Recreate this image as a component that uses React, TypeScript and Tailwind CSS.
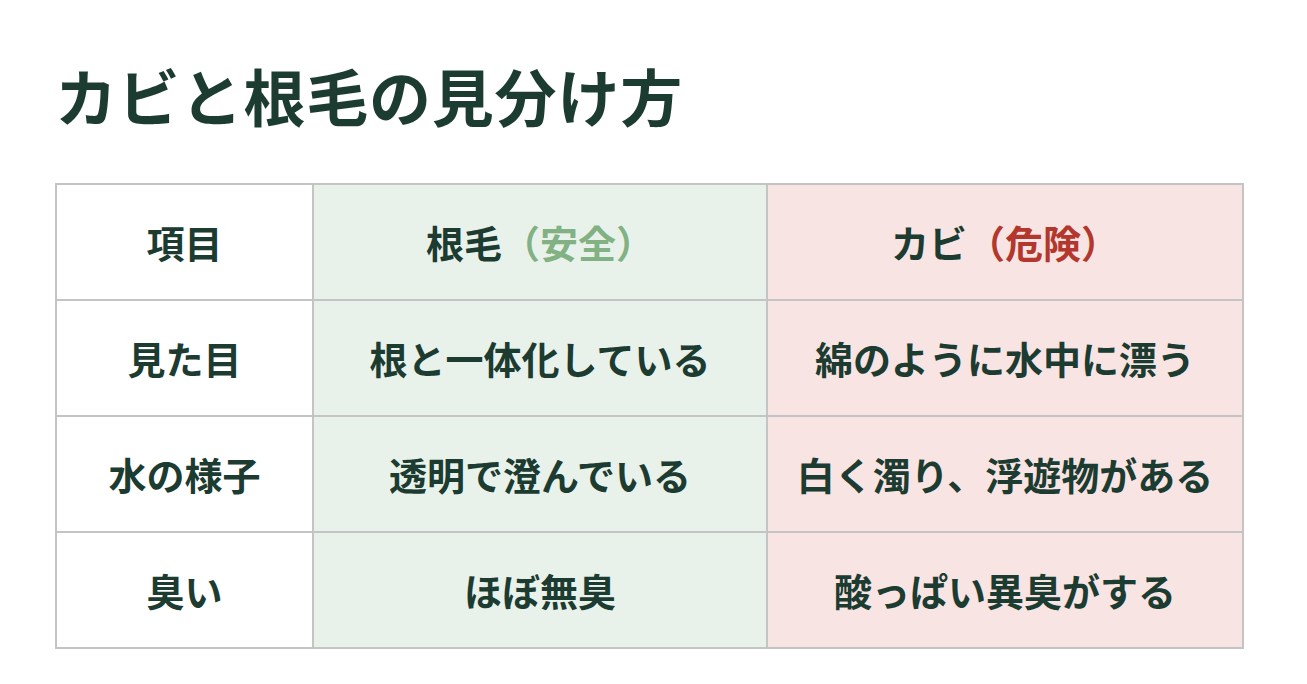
import React from "react";

type Row = { label: string; safe: string; danger: string };

const ROWS: Row[] = [
  { label: "見た目", safe: "根と一体化している", danger: "綿のように水中に漂う" },
  { label: "水の様子", safe: "透明で澄んでいる", danger: "白く濁り、浮遊物がある" },
  { label: "臭い", safe: "ほぼ無臭", danger: "酸っぱい異臭がする" },
];

const FONT = "font-['Noto_Sans_CJK_JP','Noto_Sans',sans-serif]";

export default function App() {
  return (
    <main className={`min-h-screen w-full bg-white px-[55px] pt-[64px] text-[#1c3b31] ${FONT}`}>
      <h1 className="text-[62px] font-bold leading-none tracking-[0.8px]">カビと根毛の見分け方</h1>

      <table className="mt-[57px] w-[1187px] table-fixed border-collapse text-[38px] leading-none">
        <colgroup>
          <col className="w-[257px]" />
          <col className="w-[454px]" />
          <col className="w-[476px]" />
        </colgroup>
        <thead>
          <tr className="h-[116px]">
            <th className="border-2 border-[#c4c4c4] bg-white font-bold">項目</th>
            <th className="border-2 border-[#c4c4c4] bg-[#e9f2ea] font-bold">
              根毛<span className="text-[#82b183]">（安全）</span>
            </th>
            <th className="border-2 border-[#c4c4c4] bg-[#f8e4e3] font-bold">
              カビ<span className="text-[#b3372c]">（危険）</span>
            </th>
          </tr>
        </thead>
        <tbody>
          {ROWS.map(row => (
            <tr key={row.label} className="h-[116px]">
              <td className="border-2 border-[#c4c4c4] bg-white text-center font-bold">{row.label}</td>
              <td className="border-2 border-[#c4c4c4] bg-[#e9f2ea] text-center font-bold">{row.safe}</td>
              <td className="border-2 border-[#c4c4c4] bg-[#f8e4e3] text-center font-bold">{row.danger}</td>
            </tr>
          ))}
        </tbody>
      </table>
    </main>
  );
}
